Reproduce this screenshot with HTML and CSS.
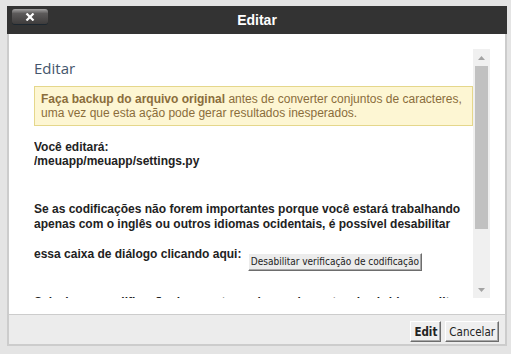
FILE: index.html
```
<!DOCTYPE html>
<html lang="pt-BR">
<head>
    <meta charset="UTF-8">
    <meta name="viewport" content="width=device-width, initial-scale=1.0">
    <title>Editar</title>
    <link rel="stylesheet" href="styles.css">
</head>
<body>
    <div class="dialog">
        <div class="titlebar">
            <button class="close" title="Fechar">
                <svg width="10" height="8" viewBox="0 0 10 8">
                    <path d="M1.5 0.5 L8.5 7.5 M8.5 0.5 L1.5 7.5" stroke="#fff" stroke-width="2.2" fill="none"/>
                </svg>
            </button>
            <h1>Editar</h1>
        </div>

        <div class="body">
            <div class="scroller">
                <div class="content">
                    <h2>Editar</h2>

                    <div class="warning">
                        <b>Faça backup do arquivo original</b> antes de converter conjuntos de caracteres, uma vez que esta ação pode gerar resultados inesperados.
                    </div>

                    <div class="target">
                        Você editará:<br>
                        /meuapp/meuapp/settings.py
                    </div>

                    <p class="note">
                        Se as codificações não forem importantes porque você estará trabalhando apenas com o inglês ou outros idiomas ocidentais, é possível desabilitar essa caixa de diálogo clicando aqui:
                        <button class="small-btn">Desabilitar verificação de codificação</button>
                    </p>

                    <p class="note next">
                        Selecione a codificação de caracteres do arquivo antes de abri-lo no editor de texto.
                    </p>
                </div>

                <!-- barra de rolagem desenhada -->
                <div class="scrollbar">
                    <span class="sb-btn">
                        <svg width="7" height="4" viewBox="0 0 7 4"><polygon points="0,4 3.5,0 7,4" fill="#a3a3a3"/></svg>
                    </span>
                    <span class="sb-track"><span class="sb-thumb"></span></span>
                    <span class="sb-btn">
                        <svg width="7" height="4" viewBox="0 0 7 4"><polygon points="0,0 3.5,4 7,0" fill="#a3a3a3"/></svg>
                    </span>
                </div>
            </div>
        </div>

        <div class="footer">
            <button class="btn primary">Edit</button>
            <button class="btn">Cancelar</button>
        </div>
    </div>
</body>
</html>
```
FILE: styles.css
```
body {
    margin: 0;
    background-color: #e4e4e4;
    font-family: "Liberation Sans", Arial, sans-serif;
}
.dialog {
    width: 500px;
    margin: 6px 0 0 7px;
}
.titlebar {
    display: grid;
    grid-template-columns: 1fr auto 1fr;
    height: 28px;
    background-color: #333;
}
.close {
    justify-self: start;
    align-self: start;
    display: flex;
    align-items: center;
    justify-content: center;
    width: 36px;
    height: 15px;
    margin: 3px 0 0 5px;
    padding: 0;
    border: none;
    border-radius: 3px;
    background: linear-gradient(#a3a2a2, #5c5a5a 30%, #3e3c3c);
    box-shadow: 0 1px 0 #1c2730;
}
.titlebar h1 {
    margin: 0;
    font-size: 14px;
    line-height: 28px;
    font-weight: bold;
    color: #fff;
}
.body {
    box-sizing: border-box;
    height: 280px;
    padding: 15px 15px 16px 25px;
    background-color: #fff;
    border: solid #ccc;
    border-width: 0 2px;
}
.scroller {
    display: flex;
    height: 249px;
}
.content {
    flex: 1;
    overflow: hidden;
    font-size: 12px;
    color: #222;
}
.content h2 {
    margin: 9px 0 8px;
    font: 15px/20px "Open Sans", sans-serif;
    color: #44566c;
}
.warning {
    padding: 5px 6px;
    line-height: 14px;
    border: 1px solid #e5d78b;
    background-color: #fdf6d3;
    color: #8a6d3b;
}
.target {
    margin-top: 14px;
    line-height: 14px;
    font-weight: bold;
}
.note {
    margin: 34px 0 0;
    line-height: 15px;
    font-weight: bold;
}
.note.next {
    margin-top: 24px;
}
.small-btn {
    margin: 21px 0 0 3px;
    padding: 1px 2px;
    height: 18px;
    vertical-align: -7px;
    font: 10px/14px "DejaVu Sans Condensed", "DejaVu Sans", sans-serif;
    color: #222;
    background-color: #ececec;
    border: 1px solid;
    border-color: #fff #6d6d6d #6d6d6d #fff;
    box-shadow: inset -1px -1px 0 #a8a8a8;
}
.scrollbar {
    display: flex;
    flex-direction: column;
    width: 17px;
    background-color: #f0f0f0;
}
.sb-btn {
    display: flex;
    align-items: center;
    justify-content: center;
    height: 17px;
}
.sb-track {
    flex: 1;
    padding: 0 2px;
}
.sb-thumb {
    display: block;
    height: 163px;
    background-color: #c1c1c1;
}
.footer {
    display: flex;
    justify-content: flex-end;
    gap: 4px;
    height: 32px;
    box-sizing: border-box;
    padding: 6px 6px 0;
    background-color: #ececec;
    border: solid #ccc;
    border-width: 1px 2px 2px;
}
.btn {
    height: 21px;
    padding: 0 3px;
    font: 11.5px "DejaVu Sans Condensed", "DejaVu Sans", sans-serif;
    color: #222;
    background-color: #efefef;
    border: 1px solid;
    border-color: #fff #6d6d6d #6d6d6d #fff;
    box-shadow: inset -1px -1px 0 #a8a8a8;
}
.btn.primary {
    font-weight: bold;
}
```
